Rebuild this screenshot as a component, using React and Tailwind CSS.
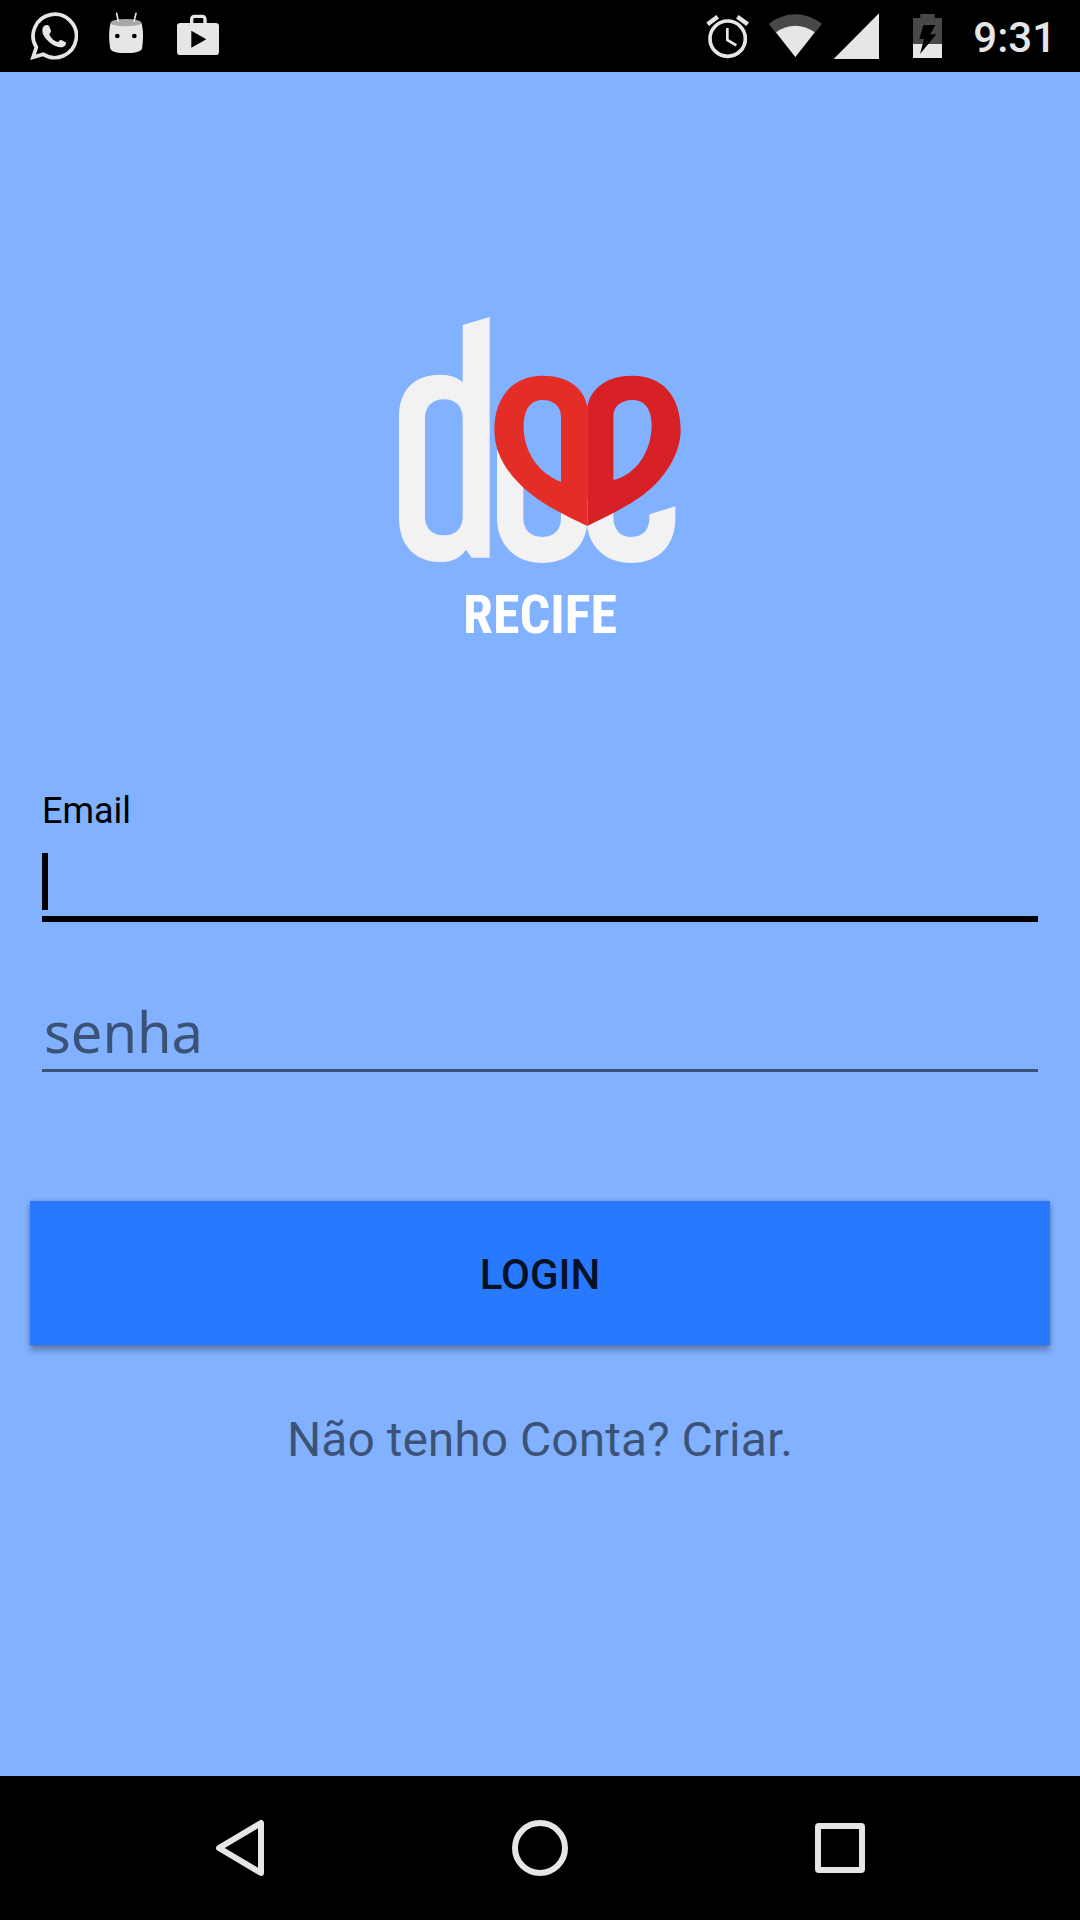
import { useState } from 'react'

function WhatsappIcon() {
  return (
    <svg className="h-12 w-12" viewBox="90 36 144 144" aria-hidden="true">
      <path d="M109 142A65 65 0 1 1 130 163L99 172Z" fill="none" stroke="#e6e6e6" strokeWidth="11" />
      <path
        d="M128 84C132 73 143 73 147 78L153 92C154 97 147 100 148 104C153 114 161 122 172 126C176 126 179 119 184 120L197 127C200 131 197 138 189 141C180 144 165 140 152 130C140 120 127 105 127 93Z"
        fill="#e6e6e6"
      />
    </svg>
  )
}

function CyborgIcon() {
  return (
    <svg className="h-12 w-9" viewBox="324 36 108 144" aria-hidden="true">
      <path
        d="M332 68H424C431 90 430 120 426 146C420 157 400 159 378 159C356 159 336 157 331 146C326 120 326 90 332 68Z"
        fill="#e6e6e6"
      />
      <ellipse cx="378" cy="68" rx="46" ry="11" fill="#a8a8a8" />
      <path d="M350 40L355 64M408 40L402 64" stroke="#e6e6e6" strokeWidth="5" strokeLinecap="round" />
      <circle cx="352" cy="108" r="7" />
      <circle cx="403" cy="108" r="7" />
    </svg>
  )
}

function PlayStoreIcon() {
  return (
    <svg className="h-12 w-12" viewBox="522 36 144 144" aria-hidden="true">
      <path d="M575 72V58Q575 49 584 49H606Q615 49 615 58V72" fill="none" stroke="#e6e6e6" strokeWidth="10" />
      <rect x="531" y="69" width="126" height="96" rx="10" fill="#e6e6e6" />
      <path d="M574 92V143L619 118Z" />
    </svg>
  )
}

function AlarmIcon() {
  return (
    <svg className="h-12 w-[54px]" viewBox="72 36 162 144" fill="none" stroke="#e6e6e6" aria-hidden="true">
      <circle cx="146" cy="116" r="53" strokeWidth="11" />
      <path d="M145 84V120L172 136" strokeWidth="8" />
      <path d="M86 73L116 50M175 50L206 73" strokeWidth="13" />
    </svg>
  )
}

function WifiIcon() {
  return (
    <svg className="h-12 w-15" viewBox="258 36 180 144" aria-hidden="true">
      <path d="M349 171L269 72Q306 43 349 43T429 72Z" fill="#484848" />
      <path d="M349 171L291 97Q318 77 349 77T407 97Z" fill="#e6e6e6" />
    </svg>
  )
}

function SignalIcon() {
  return (
    <svg className="h-12 w-12" viewBox="462 36 144 144" aria-hidden="true">
      <path d="M600 40V177H464Z" fill="#e6e6e6" />
    </svg>
  )
}

function BatteryIcon() {
  return (
    <svg className="mx-[22px] h-12 w-8" viewBox="696 36 96 144" aria-hidden="true">
      <path d="M724 42H767V54H789V132H702V54H724Z" fill="#484848" />
      <path d="M702 132H789V174H702Z" fill="#e6e6e6" />
      <path d="M733 75H769L754 103H772L723 162L735 117H721Z" />
    </svg>
  )
}

function StatusBar() {
  return (
    <header className="flex h-18 items-center justify-between bg-black pr-6 pl-[30px]">
      <div className="flex items-center gap-[30px]">
        <WhatsappIcon />
        <CyborgIcon />
        <PlayStoreIcon />
      </div>
      <div className="flex items-center gap-2">
        <AlarmIcon />
        <WifiIcon />
        <SignalIcon />
        <BatteryIcon />
        <span className="pt-1 text-[42px] leading-12 font-medium text-[#e6e6e6]">9:31</span>
      </div>
    </header>
  )
}

function Logo() {
  return (
    <div className="flex flex-col items-center">
      <svg className="h-[246px] w-[282px]" viewBox="57 51 846 738" role="img" aria-label="doe">
        <g fill="#f2f2f2" fillRule="evenodd">
          <path d="M329 51V773H275L258 749C240 775 215 786 177 786C110 786 57 740 57 655V350C57 268 105 224 180 224C210 224 235 233 248 247V75ZM248 355C248 320 227 298 192 298C157 298 135 320 135 355V650C135 685 157 706 192 706C227 706 248 685 248 650Z" />
          <path d="M351 450V655C351 738 410 789 487 789C560 789 612 745 621 678C631 745 680 789 754 789C832 789 886 740 886 655V619L808 643V655C808 690 788 711 754 711C722 711 700 690 700 650V600H543V655C543 690 522 711 487 711C452 711 430 690 430 655V540Z" />
        </g>
        <g fillRule="evenodd">
          <path
            d="M622 320C613 265 565 227 487 227C400 227 343 290 343 390C343 465 388 530 450 580C505 624 565 650 622 678ZM543 350C543 320 522 300 488 300C450 300 431 330 431 380C431 460 480 522 543 545Z"
            fill="#e52d27"
          />
          <path
            d="M622 320C632 265 680 227 757 227C850 227 902 290 902 390C902 465 850 540 790 584C735 624 680 649 622 678ZM700 350C700 320 722 300 757 300C797 300 815 330 815 380C812 460 765 525 700 540Z"
            fill="#d82027"
          />
        </g>
      </svg>
      <p className="mt-[22px] font-['Roboto_Condensed','Liberation_Sans_Narrow',Roboto,sans-serif] text-[54px] leading-15 font-bold text-white">
        RECIFE
      </p>
    </div>
  )
}

function LoginForm() {
  const [email, setEmail] = useState('')
  const [password, setPassword] = useState('')

  return (
    <form className="mt-[142px] px-[30px]" onSubmit={(e) => e.preventDefault()}>
      <div className="px-3">
        <label htmlFor="email" className="block text-4xl leading-12 text-black">
          Email
        </label>
        <div className="flex h-[87px] items-center border-b-6 border-black pt-3">
          {email === '' && <span className="h-[57px] w-1.5 bg-black" />}
          <input
            id="email"
            type="email"
            value={email}
            onChange={(e) => setEmail(e.target.value)}
            className="min-w-0 flex-1 text-[54px] leading-16 outline-none"
          />
        </div>
        <input
          type="password"
          aria-label="senha"
          placeholder="senha"
          value={password}
          onChange={(e) => setPassword(e.target.value)}
          className="mt-[63px] h-[87px] w-full border-b-3 border-black/54 pt-2 pl-0.5 font-['Noto_Sans',sans-serif] text-[56px] leading-16 outline-none placeholder:text-black/54"
        />
      </div>
      <button
        type="submit"
        className="mt-[129px] h-36 w-full bg-[#2979ff] pt-1 text-[42px] leading-12 font-medium text-black/87 shadow-[0_6px_6px_rgba(0,0,0,0.25),0_0_4px_rgba(0,0,0,0.2)]"
      >
        LOGIN
      </button>
    </form>
  )
}

function NavBar() {
  return (
    <nav className="grid h-36 grid-cols-3 items-center bg-black px-[90px]">
      <button type="button" aria-label="Back" className="flex justify-center">
        <svg className="size-16" viewBox="0 0 64 64" fill="none" stroke="#e6e6e6" strokeWidth="6" strokeLinejoin="round">
          <path d="M53 7V57L11 32Z" />
        </svg>
      </button>
      <button type="button" aria-label="Home" className="flex justify-center">
        <svg className="size-16" viewBox="0 0 64 64" fill="none" stroke="#e6e6e6" strokeWidth="6">
          <circle cx="32" cy="32" r="25" />
        </svg>
      </button>
      <button type="button" aria-label="Recent apps" className="flex justify-center">
        <svg className="size-16" viewBox="0 0 64 64" fill="none" stroke="#e6e6e6" strokeWidth="6">
          <rect x="10" y="10" width="44" height="44" rx="1" />
        </svg>
      </button>
    </nav>
  )
}

export default function App() {
  return (
    <div className="flex min-h-screen flex-col bg-[#82b1ff] font-[Roboto,sans-serif]">
      <StatusBar />
      <main className="flex-1 pt-[245px] pb-16">
        <Logo />
        <LoginForm />
        <p className="mt-[63px] text-center text-5xl leading-16">
          <a href="#criar" className="text-black/54">
            Não tenho Conta? Criar.
          </a>
        </p>
      </main>
      <NavBar />
    </div>
  )
}
